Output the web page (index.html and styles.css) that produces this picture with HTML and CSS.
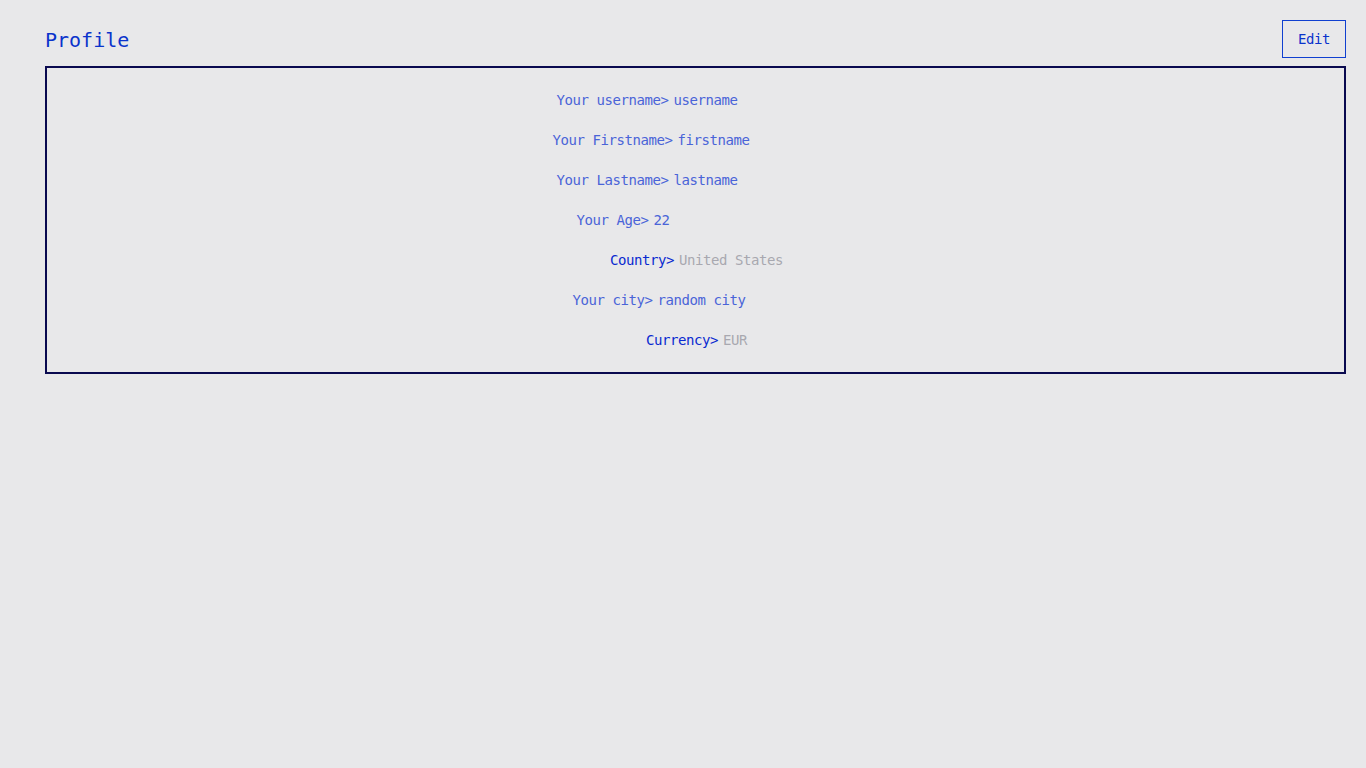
FILE: index.html
```html
<!DOCTYPE html>
<html lang="en">
<head>
<meta charset="utf-8">
<title>Profile</title>
<link rel="stylesheet" href="styles.css">
</head>
<body>
<div class="page">
  <header class="head">
    <h1 class="title">Profile</h1>
    <button class="edit" type="button">Edit</button>
  </header>
  <section class="card">
    <div class="row"><span class="label">Your username&gt;</span><span class="value field">username</span></div>
    <div class="row"><span class="label">Your Firstname&gt;</span><span class="value field">firstname</span></div>
    <div class="row"><span class="label">Your Lastname&gt;</span><span class="value field">lastname</span></div>
    <div class="row"><span class="label">Your Age&gt;</span><span class="value field">22</span></div>
    <div class="row"><span class="label strong">Country&gt;</span><span class="value select">United States</span></div>
    <div class="row"><span class="label">Your city&gt;</span><span class="value field">random city</span></div>
    <div class="row"><span class="label strong">Currency&gt;</span><span class="value select">EUR</span></div>
  </section>
</div>
</body>
</html>
```
FILE: styles.css
```css
html, body {
  margin: 0;
  padding: 0;
  background: #e8e8ea;
}

body {
  font-family: "DejaVu Sans Mono", "Liberation Mono", monospace;
  color: #4a64d8;
}

.page {
  padding: 20px 20px 0 45px;
}

.head {
  display: flex;
  justify-content: space-between;
  align-items: flex-start;
  height: 46px;
}

.title {
  margin: 7px 0 0 0;
  font-size: 20px;
  font-weight: normal;
  color: #0a33cc;
  line-height: 26px;
}

.edit {
  width: 64px;
  height: 38px;
  margin: 0;
  padding: 0;
  border: 1px solid #1040d0;
  background: transparent;
  color: #0a33cc;
  font-family: inherit;
  font-size: 14px;
  letter-spacing: -0.43px;
  cursor: pointer;
}

.card {
  border: 2px solid #0a0a50;
  padding: 12px 0;
}

.row {
  display: flex;
  justify-content: center;
  align-items: center;
  gap: 4px;
  height: 40px;
  font-size: 14px;
  letter-spacing: -0.43px;
}

.label {
  white-space: pre;
}

.label.strong {
  color: #0a2ad0;
}

.value {
  padding-left: 1px;
  white-space: pre;
}

.field {
  width: 161px;
}

.select {
  color: #a8a8b0;
  margin-right: -2px;
}
```
